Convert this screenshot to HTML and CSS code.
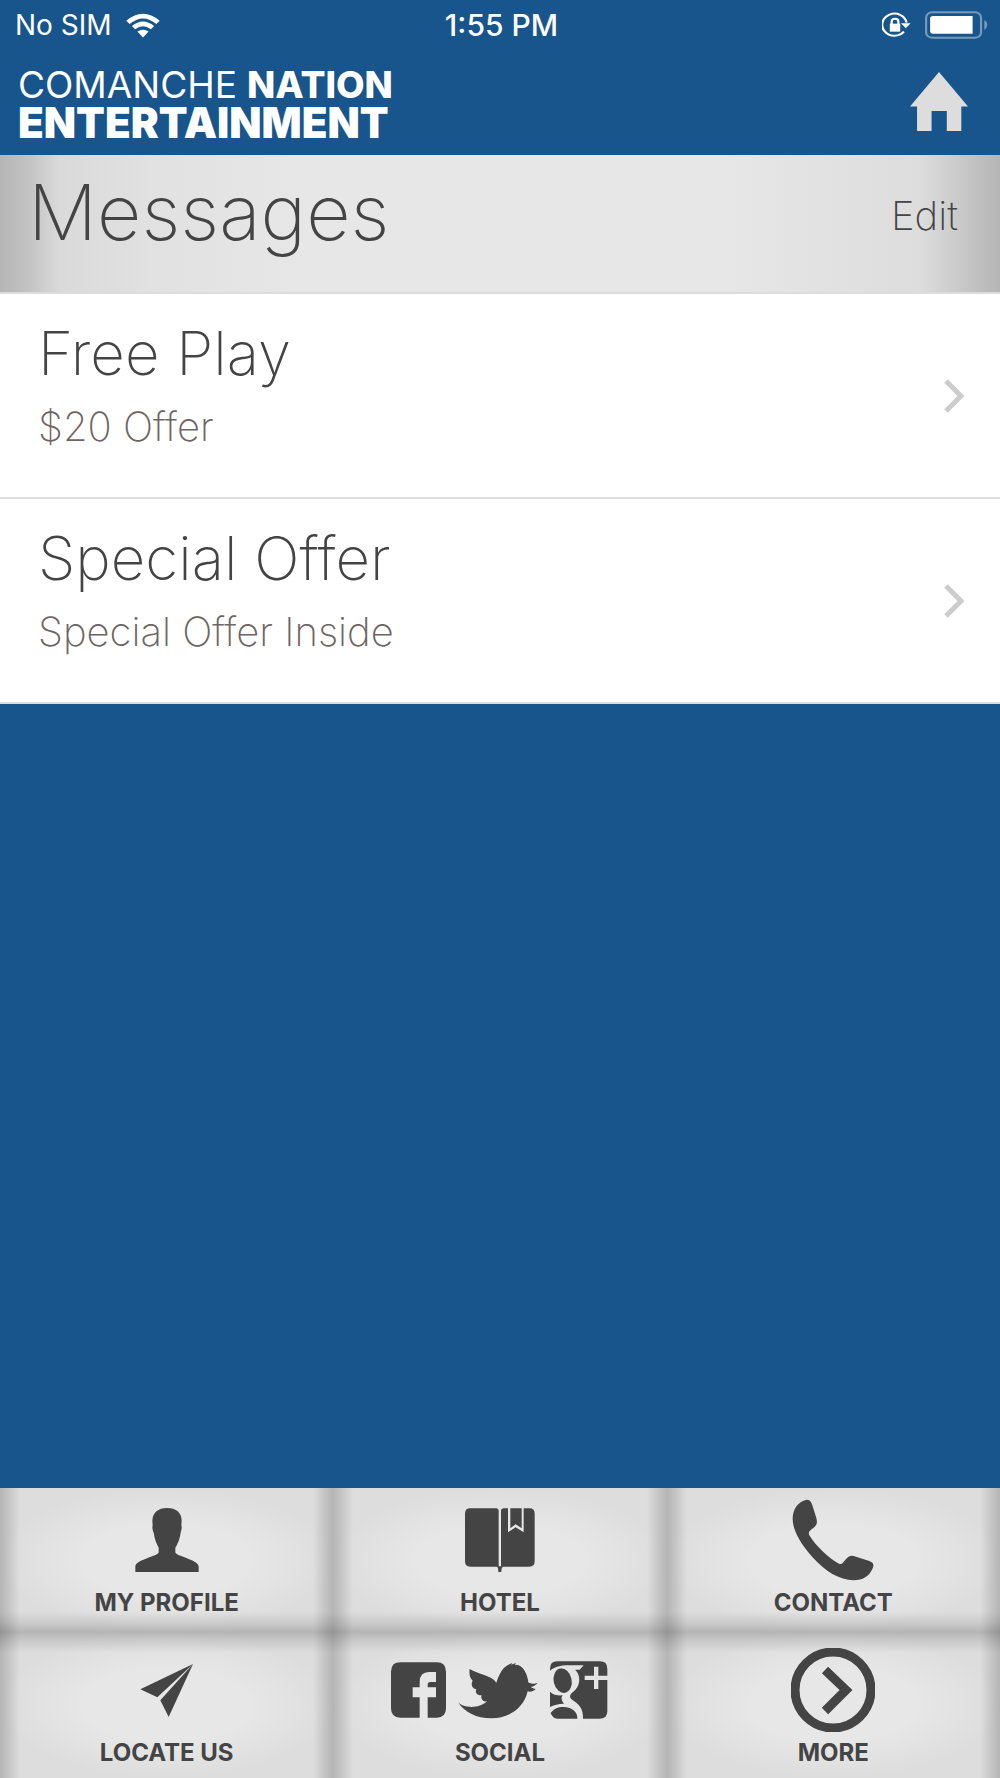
FILE: index.html
```html
<!DOCTYPE html>
<html lang="en">

<head>
    <meta charset="UTF-8">
    <meta name="viewport" content="width=device-width, initial-scale=1.0">
    <title>Messages</title>
    <link rel="stylesheet" href="styles.css">
</head>

<body>
    <div class="status-bar">
        <div class="carrier">
            <span>No SIM</span>
            <svg class="wifi" viewBox="376 35 104 75" aria-hidden="true">
                <path d="M377 58Q428 15 479 58L469 68Q428 34 387 68Z" />
                <path d="M394 74Q428 46 462 74L452 84Q428 65 404 84Z" />
                <path d="M411 91Q428 80 445 91L428 109Z" />
            </svg>
        </div>
        <time class="clock">1:55 PM</time>
        <div class="indicators">
            <svg class="lock" viewBox="1250 34 78 78" preserveAspectRatio="none" aria-hidden="true">
                <path class="ring" d="M1309 93A33 33 0 1 1 1316 66" />
                <path d="M1301 68H1327L1314 83Z" />
                <path d="M1271 69H1299V93H1271Z" />
                <path class="shackle" d="M1276 71V63Q1276 54 1285 54Q1294 54 1294 63V71" />
            </svg>
            <svg class="battery" viewBox="1365 30 172 85" preserveAspectRatio="none" aria-hidden="true">
                <rect class="case" x="1368" y="34" width="150" height="77" rx="16" />
                <path class="case-tip" d="M1527 57Q1535 62 1535 72Q1535 82 1527 88Z" />
                <path d="M1387 45H1495V99H1387Q1379 99 1379 91V53Q1379 45 1387 45Z" />
            </svg>
        </div>
    </div>

    <header class="header">
        <div class="logo">
            <div class="logo-top">
                <span class="logo-light">COMANCHE</span>
                <span class="logo-bold">NATION</span>
            </div>
            <div class="logo-bottom">ENTERTAINMENT</div>
        </div>
        <a href="#" class="home" aria-label="Home">
            <svg viewBox="1326 217 156 176" preserveAspectRatio="none" aria-hidden="true">
                <path d="M1404 217L1482 320H1464V393H1425V333H1384V393H1345V320H1326Z" />
            </svg>
        </a>
    </header>

    <div class="title-bar">
        <h1>Messages</h1>
        <button type="button" class="edit">Edit</button>
    </div>

    <main class="messages">
        <a href="#" class="message">
            <div>
                <h2>Free Play</h2>
                <p>$20 Offer</p>
            </div>
            <svg class="chevron" viewBox="0 0 20 34" aria-hidden="true">
                <path d="M2 2L17 17L2 32" />
            </svg>
        </a>
        <a href="#" class="message">
            <div>
                <h2>Special Offer</h2>
                <p>Special Offer Inside</p>
            </div>
            <svg class="chevron" viewBox="0 0 20 34" aria-hidden="true">
                <path d="M2 2L17 17L2 32" />
            </svg>
        </a>
    </main>

    <nav class="tabs">
        <a href="#" class="tab">
            <span class="tab-icon">
                <svg width="64" height="64" viewBox="403 86 192 192" aria-hidden="true">
                    <path d="M499 86C527 86 543 100 543 124L542 138C545 144 541 154 540 160C537 180 532 192 524 205V219C526 231 588 240 594 260V278H404V260C410 240 472 231 474 219V205C467 192 462 180 459 160C456 154 454 144 456 138L455 124C456 100 472 86 499 86Z" />
                </svg>
            </span>
            <span>MY PROFILE</span>
        </a>
        <a href="#" class="tab">
            <span class="tab-icon">
                <svg width="70" height="64" viewBox="405 86 210 192" aria-hidden="true">
                    <path d="M421 87H498Q506 87 506 95V262H421Q405 262 405 246V103Q405 87 421 87Z" />
                    <path d="M522 87H534V159L557 144L581 159V87H598Q614 87 614 103V246Q614 262 598 262H513V95Q513 87 522 87Z" />
                    <path d="M541 87H575V147L557 135L541 147Z" />
                    <path d="M500 261H520Q513 266 514 278H505Q506 266 500 261Z" />
                </svg>
            </span>
            <span>HOTEL</span>
        </a>
        <a href="#" class="tab">
            <span class="tab-icon">
                <svg width="82" height="82" viewBox="396 58 246 246" aria-hidden="true">
                    <path d="M440 60C449 60 453 65 456 74L469 115C473 130 470 137 460 145C450 153 442 157 449 168C465 195 505 235 537 252C545 256 548 250 555 242C566 228 574 226 588 231L628 244C640 249 643 254 638 266C627 291 609 302 580 302C540 302 494 275 455 230C420 190 398 150 398 118C398 90 413 65 440 60Z" />
                </svg>
            </span>
            <span>CONTACT</span>
        </a>
        <a href="#" class="tab">
            <span class="tab-icon">
                <svg width="53" height="53" viewBox="420 552 159 159" aria-hidden="true">
                    <path d="M579 552L421 628L472 652Z" />
                    <path d="M579 552L481 661L506 711Z" />
                </svg>
            </span>
            <span>LOCATE US</span>
        </a>
        <a href="#" class="tab">
            <span class="tab-icon">
                <svg width="55" height="56" viewBox="186 538 165 168" aria-hidden="true">
                    <path d="M214 539H323Q351 539 351 567V677Q351 705 323 705H296V644H321V614H296V606Q296 598 304 598H321V568H300Q272 568 272 598V614H251V644H272V705H214Q186 705 186 677V567Q186 539 214 539Z" />
                </svg>
                <svg width="80" height="57" viewBox="386 536 240 171" aria-hidden="true">
                    <path d="M386 657C402 674 448 678 473 654C461 657 453 645 457 636C444 637 436 627 441 618C429 616 423 603 430 592C421 584 419 571 421 557C446 573 486 575 501 598C507 582 516 554 536 545L549 538L545 544L560 539L556 544L566 545C584 551 594 573 597 597C607 604 617 601 625 598C621 605 613 609 604 611C610 614 615 617 619 617C612 625 602 626 595 624C584 674 539 705 487 705C440 705 407 688 386 657Z" />
                </svg>
                <svg width="58" height="58" viewBox="661 537 174 174" aria-hidden="true">
                    <path d="M683 538H811Q833 538 833 560V581H806V554H793V581H765V594H793V621H806V594H833V688Q833 710 811 710H760C761 675 744 666 726 652C718 645 721 638 729 631C745 619 751 602 748 585C746 574 741 567 736 563H750L762 550H714C694 550 674 555 661 566V560Q661 538 683 538Z" />
                    <ellipse cx="699" cy="596" rx="27" ry="37" transform="rotate(-12 699 596)" />
                    <path d="M661 629C670 639 684 641 699 640C693 648 696 656 703 665C686 665 672 669 661 675Z" />
                    <path d="M663 693C674 675 700 671 720 678C737 685 743 696 743 710H683Q669 710 663 693Z" />
                </svg>
            </span>
            <span>SOCIAL</span>
        </a>
        <a href="#" class="tab">
            <span class="tab-icon">
                <svg width="84" height="84" viewBox="0 0 84 84" aria-hidden="true">
                    <circle class="more-ring" cx="42" cy="42" r="38" />
                    <path class="more-arrow" d="M34 22L55 42L34 63" />
                </svg>
            </span>
            <span>MORE</span>
        </a>
    </nav>
</body>

</html>
```

FILE: styles.css
```css
* {
    margin: 0px;
    padding: 0px;
    box-sizing: border-box;
}

body {
    display: flex;
    flex-direction: column;
    min-height: 100vh;
    font-family: Inter, "Liberation Sans", sans-serif;
    background-color: #18558c;
    color: #444444;
}

a {
    color: inherit;
    text-decoration: none;
}

svg {
    display: block;
    fill: currentColor;
}

/* status bar */
.status-bar {
    display: grid;
    grid-template-columns: 1fr auto 1fr;
    align-items: center;
    height: 50px;
    padding: 0px 12px 0px 15px;
    font-size: 28px;
    color: white;
}

.carrier {
    display: flex;
    align-items: center;
    gap: 14px;
}

.wifi {
    width: 34px;
    height: 25px;
}

.clock {
    font-size: 30px;
    font-weight: 500;
}

.indicators {
    display: flex;
    justify-content: flex-end;
    align-items: center;
    gap: 14px;
}

.lock {
    width: 29px;
    height: 26px;
}

.ring,
.shackle {
    fill: none;
    stroke: currentColor;
    stroke-width: 6;
}

.battery {
    width: 63px;
    height: 28px;
}

.case {
    fill: none;
    stroke: #7799bb;
    stroke-width: 6;
}

.case-tip {
    fill: #7799bb;
}

/* header */
.header {
    display: flex;
    justify-content: space-between;
    align-items: flex-start;
    height: 105px;
    padding: 16px 32px 0px 18px;
    color: white;
}

.logo-top {
    display: flex;
    gap: 10px;
    font-size: 37px;
    line-height: 38px;
}

.logo-light {
    font-weight: 400;
}

.logo-bold {
    font-weight: 800;
}

.logo-bottom {
    font-size: 42px;
    font-weight: 900;
    line-height: 38px;
}

.home {
    padding-top: 6px;
    color: #dddddd;
}

.home svg {
    width: 58px;
    height: 59px;
}

/* title bar */
.title-bar {
    display: flex;
    justify-content: space-between;
    align-items: center;
    height: 139px;
    padding: 0px 42px 16px 28px;
    border-bottom: 2px solid #dddddd;
    background: linear-gradient(to right, #b5b5b5 0%, #c4c4c4 3%, #dadada 6%, #e1e1e1 15%, #e7e7e7 30%, #e7e7e7 72%, #dddddd 92%, #c9c9c9 96%, #b5b5b5 100%);
}

.title-bar h1 {
    padding-bottom: 8px;
    font-size: 77px;
    font-weight: 200;
}

.edit {
    border: none;
    background: none;
    font-family: inherit;
    font-size: 40px;
    font-weight: 200;
    color: #444444;
    cursor: pointer;
}

/* message list */
.message {
    display: flex;
    justify-content: space-between;
    align-items: center;
    height: 205px;
    padding: 0px 36px 0px 38px;
    border-bottom: 2px solid #dddddd;
    background-color: white;
}

.message h2 {
    font-size: 60px;
    font-weight: 200;
    line-height: 74px;
}

.message p {
    padding-bottom: 12px;
    font-size: 40px;
    font-weight: 200;
    line-height: 74px;
    color: #6e6464;
}

.chevron {
    width: 20px;
    height: 34px;
    fill: none;
    stroke: #cccccc;
    stroke-width: 5;
}

/* bottom tabs */
.tabs {
    display: grid;
    grid-template-columns: repeat(3, 1fr);
    margin-top: auto;
}

.tab {
    display: flex;
    flex-direction: column;
    align-items: center;
    gap: 7px;
    height: 144px;
    padding-top: 10px;
    font-size: 24px;
    font-weight: 700;
    line-height: 28px;
    background:
        linear-gradient(to right, #0000002e, #00000020 2%, #00000000 6%, #00000000 94%, #00000020 98%, #0000002e),
        linear-gradient(to top, #0000002e, #0000001a 5%, #00000000 14%),
        radial-gradient(closest-side, #e7e7e7 50%, #dddddd);
}

.tab:nth-child(n + 4) {
    height: 146px;
    padding-top: 16px;
    background:
        linear-gradient(to right, #0000002e, #00000020 2%, #00000000 6%, #00000000 94%, #00000020 98%, #0000002e),
        linear-gradient(to bottom, #0000002e, #0000001a 5%, #00000000 14%),
        radial-gradient(closest-side, #e7e7e7 50%, #dddddd);
}

.tab-icon {
    display: flex;
    justify-content: center;
    align-items: center;
    gap: 12px;
    height: 84px;
}

.more-ring,
.more-arrow {
    fill: none;
    stroke: currentColor;
    stroke-width: 9;
}
```
